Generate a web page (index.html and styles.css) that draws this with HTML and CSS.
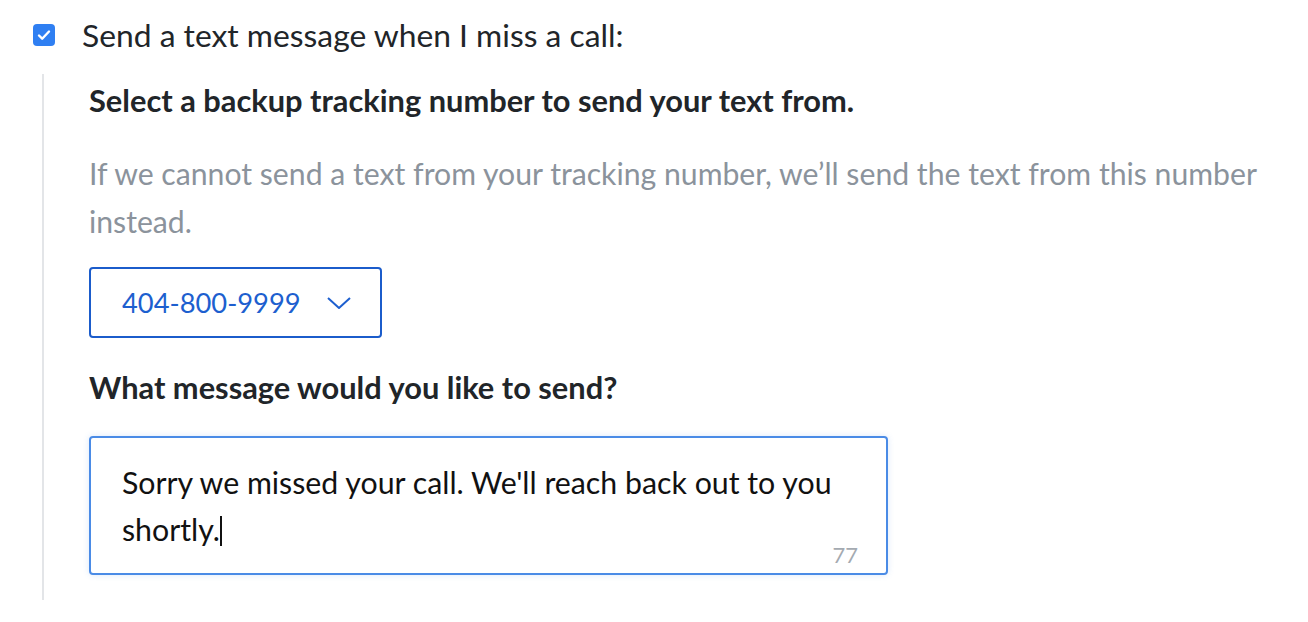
FILE: index.html
```html
<!DOCTYPE html>
<html lang="en">
<head>
    <meta charset="UTF-8">
    <meta name="viewport" content="width=device-width, initial-scale=1.0">
    <title>Missed Call Text</title>
    <link rel="stylesheet" href="styles.css">
</head>
<body>
    <div class="option">
        <label class="option-row">
            <span class="checkbox">
                <svg viewBox="0 0 22 22">
                    <path d="M6 11.5l3.2 3.2L16 7.5"/>
                </svg>
            </span>
            <span class="option-label">Send a text message when I miss a call:</span>
        </label>

        <div class="option-body">
            <div class="field-title">Select a backup tracking number to send your text from.</div>
            <p class="field-help">If we cannot send a text from your tracking number, we’ll send the text from this number instead.</p>

            <div class="select">
                <span class="select-value">404-800-9999</span>
                <svg class="select-arrow" viewBox="0 0 24 12">
                    <path d="M1 1l11 10L23 1"/>
                </svg>
            </div>

            <div class="field-title">What message would you like to send?</div>

            <div class="message">
                <div class="message-text">Sorry we missed your call. We'll reach back out to you shortly.<span class="caret"></span></div>
                <span class="message-count">77</span>
            </div>
        </div>
    </div>
</body>
</html>
```

FILE: styles.css
```css
* {
    margin: 0;
    padding: 0;
    box-sizing: border-box;
}

body {
    font-family: 'Lato', 'Noto Sans', sans-serif;
    font-size: 30px;
    line-height: 48px;
    color: #212529;
    background: #ffffff;
    padding: 11px 0 0 33px;
}

.option-row {
    display: flex;
    align-items: center;
    gap: 27px;
}

.option-label {
    font-size: 31.8px;
}

.checkbox {
    width: 22px;
    height: 22px;
    border-radius: 4px;
    background: #2f7ff2;
    display: flex;
    justify-content: center;
    align-items: center;
}

.checkbox svg {
    width: 22px;
    height: 22px;
    fill: none;
    stroke: white;
    stroke-width: 2.4;
    stroke-linecap: round;
    stroke-linejoin: round;
}

/* Nested settings */
.option-body {
    margin: 15px 0 0 9px;
    border-left: 2px solid #e3e5e8;
    padding: 3px 0 25px 45px;
    width: 1230px;
}

.field-title {
    font-weight: 700;
    font-size: 30.8px;
}

.field-help {
    color: #8b939c;
    margin-top: 24px;
    max-width: 1185px;
    font-size: 30.2px;
}

.select {
    margin: 22px 0 26px;
    width: 293px;
    height: 71px;
    border: 2px solid #1b5ccb;
    border-radius: 4px;
    display: flex;
    align-items: center;
    padding-left: 31px;
    gap: 26px;
}

.select-value {
    color: #1d5fcf;
    font-size: 27.3px;
}

.select-arrow {
    width: 24px;
    height: 12px;
    fill: none;
    stroke: #1d5fcf;
    stroke-width: 2;
}

.message {
    position: relative;
    margin-top: 24px;
    width: 799px;
    height: 139px;
    border: 2px solid #4a8be6;
    border-radius: 4px;
    box-shadow: 0 0 6px rgba(74, 139, 230, 0.2);
    padding: 21px 40px 0 31px;
}

.message-text {
    color: #111111;
    font-size: 30.3px;
    line-height: 47px;
}

.caret {
    display: inline-block;
    width: 2px;
    height: 30px;
    background: #111111;
    vertical-align: -5px;
}

.message-count {
    position: absolute;
    right: 28px;
    bottom: 4px;
    font-size: 22px;
    line-height: 28px;
    color: #a4aab1;
}
```
